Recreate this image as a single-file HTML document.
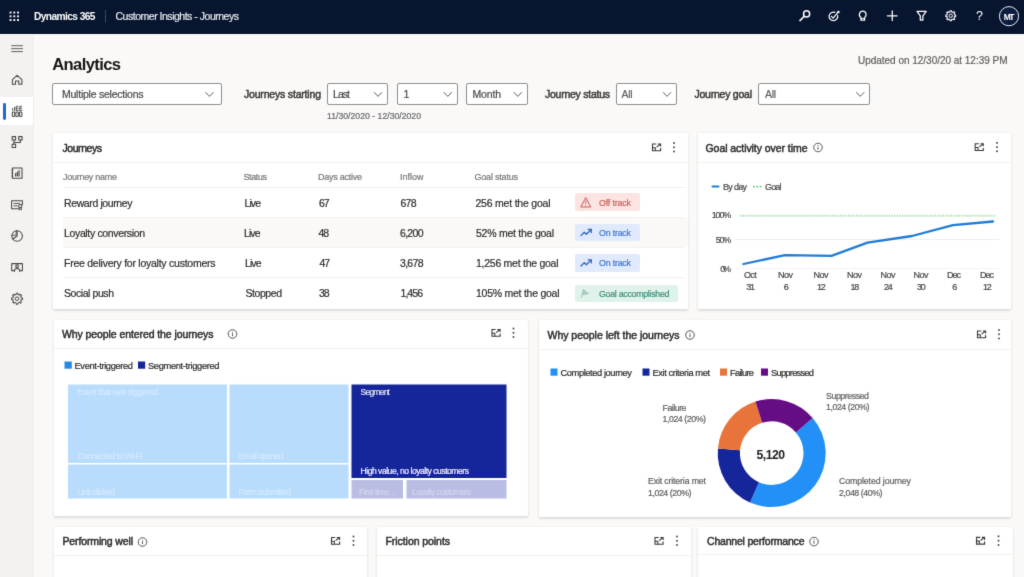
<!DOCTYPE html>
<html><head><meta charset="utf-8">
<style>
*{box-sizing:border-box;margin:0;padding:0}
html,body{width:1024px;height:577px;overflow:hidden;background:#faf9f8;font-family:"Liberation Sans",sans-serif;color:#201f1e}
#hdr{position:absolute;left:0;top:0;width:1024px;height:33.5px;background:#07152f}
#side{position:absolute;left:0;top:33.5px;width:33px;height:544px;background:#f3f2f1}
.t{position:absolute;white-space:nowrap;line-height:1;-webkit-text-stroke:0.2px}
.b{position:absolute}
.dd{position:absolute;top:82.5px;height:22.5px;background:#fff;border:1px solid #918f8d;border-radius:2px}
.card{position:absolute;background:#fff;border-radius:1.2px;box-shadow:0 1.2px 2.6px rgba(0,0,0,.11),0 0 1.2px rgba(0,0,0,.10)}
.hl{position:absolute;height:1px;background:#f2f1ef}
svg{position:absolute;overflow:visible}
#pg{position:absolute;left:0;top:0;width:1024px;height:577px;overflow:hidden;background:#faf9f8;filter:url(#soft)}
</style></head><body><svg width="0" height="0" style="position:absolute"><filter id="soft" x="0" y="0" width="100%" height="100%" color-interpolation-filters="sRGB"><feConvolveMatrix order="3" kernelMatrix="0.01134 0.08382 0.01134 0.08382 0.61935 0.08382 0.01134 0.08382 0.01134" edgeMode="duplicate" preserveAlpha="true"/></filter></svg><div id="pg">
<!-- header -->
<div id="hdr"></div>
<div id="side"></div><div class="b" style="left:33px;top:33.5px;width:1px;height:544px;background:#eeedeb"></div>
<div class="b" style="left:0;top:33.5px;width:1024px;height:1.6px;background:#fdfcfb"></div>
<div class="b" style="left:0;top:96.6px;width:33px;height:28.2px;background:#fff"></div>
<div class="b" style="left:3.3px;top:102.5px;width:2.8px;height:17px;background:#2266d3;border-radius:1.4px"></div>
<svg width="40" height="577" viewBox="0 0 40 577" style="left:0;top:0"><rect x="11.3" y="45.2" width="11.6" height="1" fill="#605e5c"/>
<rect x="11.3" y="48.15" width="11.6" height="1" fill="#605e5c"/>
<rect x="11.3" y="51.1" width="11.6" height="1" fill="#605e5c"/>
<g fill="none" stroke="#484644" stroke-width="1.05" stroke-linejoin="round" stroke-linecap="round">
<path d="M12.4,79.6 L17.1,75.4 L21.9,79.6 V84.2 H18.8 V81 H15.5 V84.2 H12.4 Z"/>
<rect x="12.3" y="112" width="2.4" height="4.5" rx="0.8"/><rect x="15.9" y="112" width="2.4" height="4.5" rx="0.8"/><rect x="19.5" y="112" width="2.4" height="4.5" rx="0.8"/>
<path d="M12.6,110.4 V108.6 M14.4,110.4 V107.2 M16.2,110.4 V106.3 H18 M16.2,108.3 H18.2 M19.8,110.4 V106.3 H21.6 M19.8,108.3 H21.6 M16.2,110.4 H18.2 M19.8,110.4 H21.8" stroke-width="0.9"/>
<rect x="12.2" y="136.6" width="3.4" height="3.4"/><rect x="18.7" y="136.6" width="3.4" height="3.4"/><rect x="12.2" y="144.2" width="3.4" height="3.4"/>
<path d="M13.9,140 V144.2 M13.9,142.4 H20.4 V140"/>
<rect x="12.4" y="168" width="9.6" height="10.2"/><path d="M15.6,176 V173.6 M17.3,176 V172 M19,176 V170.6" stroke-width="1.2"/><path d="M11.6,170.2 H13 M11.6,173.1 H13 M11.6,176 H13" stroke-width="0.8"/>
<path d="M18.6,208.8 H11.6 V200.8 H22.4 V204.4"/><path d="M13.8,203.4 H19.6 M13.8,205.8 H17.4" stroke-width="0.9"/><circle cx="20.3" cy="206.2" r="1.6"/><path d="M19.3,207.6 V210 L20.3,209.3 L21.3,210 V207.6" stroke-width="0.9"/>
<circle cx="17.1" cy="236" r="5.3"/><path d="M17.1,230.7 V236 L12.8,239"/><path d="M12.1,235.2 H16.2 V231" stroke-width="0.9"/>
<path d="M13.4,270.6 H11.7 V263.6 H22.4 V270.6 H20.7"/><circle cx="17.05" cy="266.2" r="1.35"/><path d="M14.3,271.4 C14.3,267.6 19.8,267.6 19.8,271.4"/>
</g>
<path d="M16.05,294.52 L16.28,293.25 L17.82,293.25 L18.05,294.52 L19.30,295.03 L20.35,294.30 L21.45,295.40 L20.72,296.45 L21.23,297.70 L22.50,297.93 L22.50,299.47 L21.23,299.70 L20.72,300.95 L21.45,302.00 L20.35,303.10 L19.30,302.37 L18.05,302.88 L17.82,304.15 L16.28,304.15 L16.05,302.88 L14.80,302.37 L13.75,303.10 L12.65,302.00 L13.38,300.95 L12.87,299.70 L11.60,299.47 L11.60,297.93 L12.87,297.70 L13.38,296.45 L12.65,295.40 L13.75,294.30 L14.80,295.03Z" fill="none" stroke="#484644" stroke-width="1.05" stroke-linejoin="round"/>
<circle cx="17.05" cy="298.7" r="1.8" fill="none" stroke="#484644" stroke-width="1"/></svg>

<!-- dropdowns -->
<div class="dd" style="left:52px;width:169.5px"></div>
<div class="dd" style="left:327px;width:61.3px"></div>
<div class="dd" style="left:396.5px;width:61.2px"></div>
<div class="dd" style="left:466.3px;width:61.4px"></div>
<div class="dd" style="left:616px;width:60.8px"></div>
<div class="dd" style="left:758.3px;width:112px"></div>

<!-- cards -->
<div class="card" style="left:53px;top:133px;width:635px;height:175.5px"></div>
<div class="card" style="left:697.5px;top:133px;width:313.5px;height:176px"></div>
<div class="card" style="left:53.5px;top:320px;width:474px;height:196px"></div>
<div class="card" style="left:539px;top:320px;width:471.5px;height:196.5px"></div>
<div class="card" style="left:53.5px;top:527px;width:313px;height:60px"></div>
<div class="card" style="left:377px;top:527px;width:314px;height:60px"></div>
<div class="card" style="left:698px;top:526.5px;width:315px;height:60px"></div>
<!-- header dividers -->
<div class="hl" style="left:53px;top:161.5px;width:635px"></div>
<div class="hl" style="left:697.5px;top:161.5px;width:313.5px"></div>
<div class="hl" style="left:53.5px;top:347.7px;width:474px"></div>
<div class="hl" style="left:539px;top:348.6px;width:471.5px"></div>
<div class="hl" style="left:53.5px;top:554.5px;width:313px"></div>
<div class="hl" style="left:377px;top:554.5px;width:314px"></div>
<div class="hl" style="left:698px;top:554.3px;width:315px"></div>
<!-- table -->
<div class="b" style="left:62.5px;top:217.5px;width:625.5px;height:29.5px;background:#faf9f8"></div>
<div class="hl" style="left:62.5px;top:187px;width:622.5px"></div>
<div class="hl" style="left:62.5px;top:216.7px;width:622.5px"></div>
<div class="hl" style="left:62.5px;top:246.7px;width:622.5px"></div>
<div class="hl" style="left:62.5px;top:276.7px;width:622.5px"></div>
<!-- badges -->
<div class="b" style="left:574.7px;top:193.3px;width:65.5px;height:17.8px;background:#fbe4e1;border-radius:2px"></div>
<div class="b" style="left:574.7px;top:223.6px;width:65.5px;height:17.8px;background:#e0eafc;border-radius:2px"></div>
<div class="b" style="left:574.7px;top:254px;width:65.5px;height:17.8px;background:#e0eafc;border-radius:2px"></div>
<div class="b" style="left:574.5px;top:284.6px;width:103.5px;height:17.8px;background:#e0f3ea;border-radius:2px"></div>
<svg width="1024" height="577" viewBox="0 0 1024 577" style="left:0;top:0">
<rect x="9.60" y="11.60" width="1.9" height="1.9" fill="#ffffff"/>
<rect x="9.60" y="15.35" width="1.9" height="1.9" fill="#ffffff"/>
<rect x="9.60" y="19.10" width="1.9" height="1.9" fill="#ffffff"/>
<rect x="13.35" y="11.60" width="1.9" height="1.9" fill="#ffffff"/>
<rect x="13.35" y="15.35" width="1.9" height="1.9" fill="#ffffff"/>
<rect x="13.35" y="19.10" width="1.9" height="1.9" fill="#ffffff"/>
<rect x="17.10" y="11.60" width="1.9" height="1.9" fill="#ffffff"/>
<rect x="17.10" y="15.35" width="1.9" height="1.9" fill="#ffffff"/>
<rect x="17.10" y="19.10" width="1.9" height="1.9" fill="#ffffff"/>
<rect x="105.2" y="10" width="0.8" height="12.5" fill="#4a5572"/>
<g fill="none" stroke="#ffffff" stroke-width="1.25" stroke-linecap="round" stroke-linejoin="round"><circle cx="806.6" cy="13.9" r="3.05" stroke-width="1.5"/><path d="M804.2,16.4 L799.9,20.6" stroke-width="1.5"/><path d="M837.63,15.65 A4.3,4.3 0 1 1 834.87,12.36"/><path d="M831.4,16.4 L833.1,18.1 L838.2,12.1"/><path d="M860.9,17.6 C858.2,15.6 859.3,11 862.75,11 C866.2,11 867.3,15.6 864.6,17.6 V20.2 H860.9 Z"/><path d="M861.2,18.4 H864.3" stroke-width="0.9"/><path d="M892.25,10.9 V20.6 M887.4,15.75 H897.1"/><path d="M917,11.4 H926.2 L922.9,15.8 V20 H920.3 V15.8 Z"/></g>
<circle cx="838.4" cy="11.9" r="1.25" fill="#ffffff"/>
<path d="M949.84,11.96 L950.05,10.80 L951.45,10.80 L951.66,11.96 L952.79,12.42 L953.75,11.75 L954.75,12.75 L954.08,13.71 L954.54,14.84 L955.70,15.05 L955.70,16.45 L954.54,16.66 L954.08,17.79 L954.75,18.75 L953.75,19.75 L952.79,19.08 L951.66,19.54 L951.45,20.70 L950.05,20.70 L949.84,19.54 L948.71,19.08 L947.75,19.75 L946.75,18.75 L947.42,17.79 L946.96,16.66 L945.80,16.45 L945.80,15.05 L946.96,14.84 L947.42,13.71 L946.75,12.75 L947.75,11.75 L948.71,12.42Z" fill="none" stroke="#ffffff" stroke-width="1.1" stroke-linejoin="round"/>
<circle cx="950.75" cy="15.75" r="1.7" fill="none" stroke="#ffffff" stroke-width="1"/>
<text x="979.5" y="20.4" font-family="Liberation Sans" font-size="12.5" fill="#ffffff" text-anchor="middle">?</text>
<circle cx="1009" cy="16.2" r="9.6" fill="#0c1c3e" stroke="#e8ebf3" stroke-width="1"/>
<path d="M205.5,92.2 L209.5,96.39999999999999 L213.5,92.2" fill="none" stroke="#605e5c" stroke-width="1"/>
<path d="M374,92.2 L378,96.39999999999999 L382,92.2" fill="none" stroke="#605e5c" stroke-width="1"/>
<path d="M443.75,92.2 L447.75,96.39999999999999 L451.75,92.2" fill="none" stroke="#605e5c" stroke-width="1"/>
<path d="M513.75,92.2 L517.75,96.39999999999999 L521.75,92.2" fill="none" stroke="#605e5c" stroke-width="1"/>
<path d="M663,92.2 L667,96.39999999999999 L671,92.2" fill="none" stroke="#605e5c" stroke-width="1"/>
<path d="M856.25,92.2 L860.25,96.39999999999999 L864.25,92.2" fill="none" stroke="#605e5c" stroke-width="1"/>
<g fill="none" stroke="#3b3a39" stroke-width="1.1"><path d="M656.2,144.0 H652.5 V150.7 H660.6 V148.1"/><path d="M652.5,147.7 H655.3 V150.7"/><path d="M656.6,147.1 L660.2,144.2"/><path d="M657.8,144.0 H660.6 V146.5"/></g>
<rect x="673.2" y="142.2" width="1.6" height="1.6" fill="#323130"/><rect x="673.2" y="146.5" width="1.6" height="1.6" fill="#323130"/><rect x="673.2" y="150.7" width="1.6" height="1.6" fill="#323130"/>
<g fill="none" stroke="#3b3a39" stroke-width="1.1"><path d="M978.9000000000001,143.8 H975.2 V150.5 H983.3000000000001 V147.9"/><path d="M975.2,147.5 H978.0 V150.5"/><path d="M979.3000000000001,146.9 L982.9000000000001,144.0"/><path d="M980.5,143.8 H983.3000000000001 V146.3"/></g>
<rect x="996.2" y="142.1" width="1.6" height="1.6" fill="#323130"/><rect x="996.2" y="146.29999999999998" width="1.6" height="1.6" fill="#323130"/><rect x="996.2" y="150.5" width="1.6" height="1.6" fill="#323130"/>
<g fill="none" stroke="#3b3a39" stroke-width="1.1"><path d="M495.7,329.5 H492.0 V336.2 H500.1 V333.6"/><path d="M492.0,333.2 H494.8 V336.2"/><path d="M496.1,332.6 L499.7,329.7"/><path d="M497.3,329.5 H500.1 V332.0"/></g>
<rect x="512.7" y="327.7" width="1.6" height="1.6" fill="#323130"/><rect x="512.7" y="332.0" width="1.6" height="1.6" fill="#323130"/><rect x="512.7" y="336.2" width="1.6" height="1.6" fill="#323130"/>
<g fill="none" stroke="#3b3a39" stroke-width="1.1"><path d="M981.2,331.0 H977.5 V337.7 H985.6 V335.1"/><path d="M977.5,334.7 H980.3 V337.7"/><path d="M981.6,334.1 L985.2,331.2"/><path d="M982.8,331.0 H985.6 V333.5"/></g>
<rect x="998.2" y="329.2" width="1.6" height="1.6" fill="#323130"/><rect x="998.2" y="333.5" width="1.6" height="1.6" fill="#323130"/><rect x="998.2" y="337.7" width="1.6" height="1.6" fill="#323130"/>
<g fill="none" stroke="#3b3a39" stroke-width="1.1"><path d="M335.2,537.5 H331.5 V544.2 H339.6 V541.6"/><path d="M331.5,541.2 H334.3 V544.2"/><path d="M335.6,540.6 L339.2,537.7"/><path d="M336.8,537.5 H339.6 V540.0"/></g>
<rect x="352.7" y="535.7" width="1.6" height="1.6" fill="#323130"/><rect x="352.7" y="540.0" width="1.6" height="1.6" fill="#323130"/><rect x="352.7" y="544.2" width="1.6" height="1.6" fill="#323130"/>
<g fill="none" stroke="#3b3a39" stroke-width="1.1"><path d="M658.7,537.5 H655.0 V544.2 H663.1 V541.6"/><path d="M655.0,541.2 H657.8 V544.2"/><path d="M659.1,540.6 L662.7,537.7"/><path d="M660.3,537.5 H663.1 V540.0"/></g>
<rect x="676.2" y="535.7" width="1.6" height="1.6" fill="#323130"/><rect x="676.2" y="540.0" width="1.6" height="1.6" fill="#323130"/><rect x="676.2" y="544.2" width="1.6" height="1.6" fill="#323130"/>
<g fill="none" stroke="#3b3a39" stroke-width="1.1"><path d="M980.2,537.4 H976.5 V544.1 H984.6 V541.5"/><path d="M976.5,541.1 H979.3 V544.1"/><path d="M980.6,540.5 L984.2,537.6"/><path d="M981.8,537.4 H984.6 V539.9"/></g>
<rect x="997.7" y="535.5" width="1.6" height="1.6" fill="#323130"/><rect x="997.7" y="539.9000000000001" width="1.6" height="1.6" fill="#323130"/><rect x="997.7" y="544.2" width="1.6" height="1.6" fill="#323130"/>
<circle cx="818" cy="147.5" r="4.3" fill="none" stroke="#484644" stroke-width="0.9"/><rect x="817.55" y="146.8" width="0.9" height="2.9" fill="#484644"/><rect x="817.55" y="145.1" width="0.9" height="0.9" fill="#484644"/>
<circle cx="232.5" cy="334" r="4.3" fill="none" stroke="#484644" stroke-width="0.9"/><rect x="232.05" y="333.3" width="0.9" height="2.9" fill="#484644"/><rect x="232.05" y="331.6" width="0.9" height="0.9" fill="#484644"/>
<circle cx="690" cy="335" r="4.3" fill="none" stroke="#484644" stroke-width="0.9"/><rect x="689.55" y="334.3" width="0.9" height="2.9" fill="#484644"/><rect x="689.55" y="332.6" width="0.9" height="0.9" fill="#484644"/>
<circle cx="142.5" cy="542" r="4.3" fill="none" stroke="#484644" stroke-width="0.9"/><rect x="142.05" y="541.3" width="0.9" height="2.9" fill="#484644"/><rect x="142.05" y="539.6" width="0.9" height="0.9" fill="#484644"/>
<circle cx="814" cy="541.6" r="4.3" fill="none" stroke="#484644" stroke-width="0.9"/><rect x="813.55" y="540.9" width="0.9" height="2.9" fill="#484644"/><rect x="813.55" y="539.2" width="0.9" height="0.9" fill="#484644"/>
<g fill="none" stroke="#cf5553" stroke-width="1" stroke-linejoin="round"><path d="M585.75,197.6 L590.7,207 H580.8 Z"/></g><rect x="585.3" y="200.6" width="0.9" height="3.4" fill="#cf5553"/><rect x="585.3" y="204.7" width="0.9" height="0.9" fill="#cf5553"/>
<g transform="translate(0,0)" fill="none" stroke="#2f63bd" stroke-width="1.3" stroke-linecap="round" stroke-linejoin="round"><path d="M581,235.6 L584.3,232.2 L586.3,234.3 L591,229.7"/><path d="M588.2,229.4 H591.3 V232.5"/></g>
<g transform="translate(0,30.4)" fill="none" stroke="#2f63bd" stroke-width="1.3" stroke-linecap="round" stroke-linejoin="round"><path d="M581,235.6 L584.3,232.2 L586.3,234.3 L591,229.7"/><path d="M588.2,229.4 H591.3 V232.5"/></g>
<g stroke="#93c4b6" stroke-width="0.9" stroke-linejoin="round" stroke-linecap="round"><path d="M583.7,289.7 L581.4,297.5" fill="none"/><path d="M583.6,289.9 L588.5,293.6 L582.7,294.5 Z" fill="#a8d2c6"/></g>
<rect x="735" y="239" width="264.5" height="0.8" fill="#eceae8"/>
<rect x="735" y="268" width="264.5" height="0.7" fill="#f1efee"/>
<path d="M740,215.7 H995" stroke="#addfb8" stroke-width="2" stroke-dasharray="1.5 1.2" fill="none"/>
<polyline points="743.5,264 785,255.1 831.5,255.9 867.5,242.6 912,236 953,225.1 993,221.5" fill="none" stroke="#1f7bd6" stroke-width="2.3" stroke-linejoin="round" stroke-linecap="round"/>
<rect x="711.5" y="185.5" width="8" height="2.1" rx="1" fill="#1f7bd6"/>
<path d="M753,186.6 H761.5" stroke="#6fcf85" stroke-width="1.6" stroke-dasharray="1.9 1.4" fill="none"/>
<rect x="68" y="384.5" width="159" height="78.5" fill="#b9dcfc"/>
<rect x="229.5" y="384.5" width="119.0" height="78.5" fill="#b9dcfc"/>
<rect x="68" y="464.5" width="159" height="34.0" fill="#b9dcfc"/>
<rect x="229.5" y="464.5" width="119.0" height="34.0" fill="#b9dcfc"/>
<rect x="351.5" y="384.5" width="155.0" height="93.5" fill="#15259a"/>
<rect x="351.5" y="480" width="51.5" height="18.5" fill="#babde3"/>
<rect x="406.5" y="480" width="100.0" height="18.5" fill="#babde3"/>
<rect x="64.5" y="361.5" width="7.3" height="7.2" fill="#2389e8"/><rect x="138" y="361.5" width="7.2" height="7.2" fill="#15259a"/>
<path d="M812.70,417.96 A54.0,54.0 0 0 1 749.99,502.55 L758.92,482.22 A31.8,31.8 0 0 0 795.84,432.41Z" fill="#2290f6"/>
<path d="M749.99,502.55 A54.0,54.0 0 0 1 717.91,448.39 L740.02,450.33 A31.8,31.8 0 0 0 758.92,482.22Z" fill="#15259a"/>
<path d="M717.91,448.39 A54.0,54.0 0 0 1 755.46,401.60 L762.14,422.77 A31.8,31.8 0 0 0 740.02,450.33Z" fill="#e8743b"/>
<path d="M755.46,401.60 A54.0,54.0 0 0 1 812.70,417.96 L795.84,432.41 A31.8,31.8 0 0 0 762.14,422.77Z" fill="#660d85"/>
<rect x="550.5" y="368.5" width="7" height="7.2" fill="#2290f6"/>
<rect x="642.5" y="368.5" width="7" height="7.2" fill="#15259a"/>
<rect x="720" y="368.5" width="7" height="7.2" fill="#e8743b"/>
<rect x="761" y="368.5" width="7" height="7.2" fill="#660d85"/>
</svg>
<div class="t" style="left:34.00px;top:11.57px;font-size:10.2px;color:#ffffff;font-weight:bold;-webkit-text-stroke:0;letter-spacing:-0.588px;">Dynamics 365</div>
<div class="t" style="left:115.50px;top:10.91px;font-size:10.5px;color:#e6e9f0;letter-spacing:-0.484px;">Customer Insights - Journeys</div>
<div class="t" style="left:1003.75px;top:12.90px;font-size:8.5px;color:#ffffff;font-weight:bold;-webkit-text-stroke:0;letter-spacing:-1.531px;">MT</div>
<div class="t" style="left:52.20px;top:56.95px;font-size:16.6px;color:#161514;font-weight:bold;-webkit-text-stroke:0;letter-spacing:-0.623px;">Analytics</div>
<div class="t" style="left:858.00px;top:55.53px;font-size:10px;color:#605e5c;letter-spacing:-0.021px;">Updated on 12/30/20 at 12:39 PM</div>
<div class="t" style="left:62.00px;top:89.11px;font-size:10.5px;color:#484644;letter-spacing:-0.239px;">Multiple selections</div>
<div class="t" style="left:244.00px;top:89.41px;font-size:10.5px;color:#3b3a39;-webkit-text-stroke:0.48px #3b3a39;letter-spacing:-0.186px;">Journeys starting</div>
<div class="t" style="left:333.00px;top:89.11px;font-size:10.5px;color:#484644;letter-spacing:-0.953px;">Last</div>
<div class="t" style="left:403.50px;top:89.11px;font-size:10.5px;color:#484644;">1</div>
<div class="t" style="left:472.50px;top:89.11px;font-size:10.5px;color:#484644;letter-spacing:-0.172px;">Month</div>
<div class="t" style="left:545.00px;top:89.41px;font-size:10.5px;color:#3b3a39;-webkit-text-stroke:0.48px #3b3a39;letter-spacing:-0.254px;">Journey status</div>
<div class="t" style="left:621.50px;top:89.11px;font-size:10.5px;color:#605e5c;letter-spacing:-0.336px;">All</div>
<div class="t" style="left:694.50px;top:89.41px;font-size:10.5px;color:#3b3a39;-webkit-text-stroke:0.48px #3b3a39;letter-spacing:-0.239px;">Journey goal</div>
<div class="t" style="left:765.00px;top:89.11px;font-size:10.5px;color:#605e5c;letter-spacing:-0.336px;">All</div>
<div class="t" style="left:327.00px;top:111.64px;font-size:8.7px;color:#69676a;">11/30/2020 - 12/30/2020</div>
<div class="t" style="left:62.50px;top:142.61px;font-size:10.5px;color:#2f2e2d;-webkit-text-stroke:0.48px #2f2e2d;letter-spacing:-0.444px;">Journeys</div>
<div class="t" style="left:705.50px;top:142.61px;font-size:10.5px;color:#2f2e2d;-webkit-text-stroke:0.48px #2f2e2d;letter-spacing:-0.059px;">Goal activity over time</div>
<div class="t" style="left:62.00px;top:328.61px;font-size:10.5px;color:#2f2e2d;-webkit-text-stroke:0.48px #2f2e2d;letter-spacing:-0.087px;">Why people entered the journeys</div>
<div class="t" style="left:547.50px;top:329.81px;font-size:10.5px;color:#2f2e2d;-webkit-text-stroke:0.48px #2f2e2d;letter-spacing:-0.019px;">Why people left the journeys</div>
<div class="t" style="left:62.50px;top:536.41px;font-size:10.5px;color:#2f2e2d;-webkit-text-stroke:0.48px #2f2e2d;letter-spacing:-0.133px;">Performing well</div>
<div class="t" style="left:385.50px;top:536.31px;font-size:10.5px;color:#2f2e2d;-webkit-text-stroke:0.48px #2f2e2d;letter-spacing:-0.061px;">Friction points</div>
<div class="t" style="left:707.00px;top:536.31px;font-size:10.5px;color:#2f2e2d;-webkit-text-stroke:0.48px #2f2e2d;letter-spacing:-0.194px;">Channel performance</div>
<div class="t" style="left:63.00px;top:173.08px;font-size:9px;color:#7a7876;letter-spacing:-0.277px;">Journey name</div>
<div class="t" style="left:243.50px;top:172.68px;font-size:9px;color:#7a7876;letter-spacing:-0.403px;">Status</div>
<div class="t" style="left:318.00px;top:172.68px;font-size:9px;color:#7a7876;letter-spacing:-0.253px;">Days active</div>
<div class="t" style="left:400.00px;top:172.68px;font-size:9px;color:#7a7876;">Inflow</div>
<div class="t" style="left:474.50px;top:172.68px;font-size:9px;color:#7a7876;letter-spacing:-0.203px;">Goal status</div>
<div class="t" style="left:64.00px;top:198.41px;font-size:10.5px;color:#2e2d2c;letter-spacing:-0.388px;">Reward journey</div>
<div class="t" style="left:244.50px;top:198.41px;font-size:10.5px;color:#2e2d2c;letter-spacing:-0.922px;">Live</div>
<div class="t" style="left:319.00px;top:198.41px;font-size:10.5px;color:#2e2d2c;letter-spacing:-1.188px;">67</div>
<div class="t" style="left:400.50px;top:198.41px;font-size:10.5px;color:#2e2d2c;letter-spacing:-0.766px;">678</div>
<div class="t" style="left:475.50px;top:198.41px;font-size:10.5px;color:#2e2d2c;letter-spacing:-0.216px;">256 met the goal</div>
<div class="t" style="left:64.00px;top:228.11px;font-size:10.5px;color:#2e2d2c;letter-spacing:-0.351px;">Loyalty conversion</div>
<div class="t" style="left:244.00px;top:228.11px;font-size:10.5px;color:#2e2d2c;letter-spacing:-0.922px;">Live</div>
<div class="t" style="left:318.50px;top:228.11px;font-size:10.5px;color:#2e2d2c;letter-spacing:-1.188px;">48</div>
<div class="t" style="left:400.00px;top:228.11px;font-size:10.5px;color:#2e2d2c;letter-spacing:-0.695px;">6,200</div>
<div class="t" style="left:476.00px;top:228.11px;font-size:10.5px;color:#2e2d2c;letter-spacing:-0.248px;">52% met the goal</div>
<div class="t" style="left:64.00px;top:258.11px;font-size:10.5px;color:#2e2d2c;letter-spacing:-0.247px;">Free delivery for loyalty customers</div>
<div class="t" style="left:245.00px;top:258.11px;font-size:10.5px;color:#2e2d2c;letter-spacing:-0.922px;">Live</div>
<div class="t" style="left:319.50px;top:258.11px;font-size:10.5px;color:#2e2d2c;letter-spacing:-1.188px;">47</div>
<div class="t" style="left:400.00px;top:258.11px;font-size:10.5px;color:#2e2d2c;letter-spacing:-0.695px;">3,678</div>
<div class="t" style="left:476.00px;top:258.11px;font-size:10.5px;color:#2e2d2c;letter-spacing:-0.264px;">1,256 met the goal</div>
<div class="t" style="left:64.00px;top:287.91px;font-size:10.5px;color:#2e2d2c;letter-spacing:-0.430px;">Social push</div>
<div class="t" style="left:245.50px;top:287.91px;font-size:10.5px;color:#2e2d2c;letter-spacing:-0.438px;">Stopped</div>
<div class="t" style="left:319.00px;top:287.91px;font-size:10.5px;color:#2e2d2c;letter-spacing:-1.188px;">38</div>
<div class="t" style="left:400.50px;top:287.91px;font-size:10.5px;color:#2e2d2c;letter-spacing:-0.945px;">1,456</div>
<div class="t" style="left:476.00px;top:287.91px;font-size:10.5px;color:#2e2d2c;letter-spacing:-0.254px;">105% met the goal</div>
<div class="t" style="left:599.00px;top:198.55px;font-size:8.8px;color:#cc5f5d;letter-spacing:-0.137px;">Off track</div>
<div class="t" style="left:599.00px;top:228.55px;font-size:8.8px;color:#3f76d2;letter-spacing:-0.179px;">On track</div>
<div class="t" style="left:599.00px;top:259.05px;font-size:8.8px;color:#3f76d2;letter-spacing:-0.179px;">On track</div>
<div class="t" style="left:599.00px;top:289.55px;font-size:8.8px;color:#3f8d78;letter-spacing:-0.270px;">Goal accomplished</div>
<div class="t" style="left:723.00px;top:182.78px;font-size:9px;color:#484644;letter-spacing:-0.703px;">By day</div>
<div class="t" style="left:765.00px;top:182.78px;font-size:9px;color:#484644;letter-spacing:-0.839px;">Goal</div>
<div class="t" style="left:711.75px;top:211.08px;font-size:9px;color:#484644;letter-spacing:-1.177px;">100%</div>
<div class="t" style="left:715.75px;top:236.08px;font-size:9px;color:#484644;letter-spacing:-1.258px;">50%</div>
<div class="t" style="left:720.25px;top:265.08px;font-size:9px;color:#484644;letter-spacing:-2.216px;">0%</div>
<div class="t" style="left:743.92px;top:270.78px;font-size:9px;color:#484644;letter-spacing:-0.633px;">Oct</div>
<div class="t" style="left:746.25px;top:283.38px;font-size:9px;color:#484644;letter-spacing:-1.316px;">31</div>
<div class="t" style="left:778.00px;top:270.78px;font-size:9px;color:#484644;letter-spacing:-0.508px;">Nov</div>
<div class="t" style="left:783.75px;top:283.38px;font-size:9px;color:#484644;">6</div>
<div class="t" style="left:813.50px;top:270.78px;font-size:9px;color:#484644;letter-spacing:-0.508px;">Nov</div>
<div class="t" style="left:816.95px;top:283.38px;font-size:9px;color:#484644;letter-spacing:-1.316px;">12</div>
<div class="t" style="left:847.00px;top:270.78px;font-size:9px;color:#484644;letter-spacing:-0.508px;">Nov</div>
<div class="t" style="left:850.45px;top:283.38px;font-size:9px;color:#484644;letter-spacing:-1.316px;">18</div>
<div class="t" style="left:880.50px;top:270.78px;font-size:9px;color:#484644;letter-spacing:-0.508px;">Nov</div>
<div class="t" style="left:883.95px;top:283.38px;font-size:9px;color:#484644;letter-spacing:-1.316px;">24</div>
<div class="t" style="left:913.50px;top:270.78px;font-size:9px;color:#484644;letter-spacing:-0.508px;">Nov</div>
<div class="t" style="left:916.95px;top:283.38px;font-size:9px;color:#484644;letter-spacing:-1.316px;">30</div>
<div class="t" style="left:947.00px;top:270.78px;font-size:9px;color:#484644;letter-spacing:-1.008px;">Dec</div>
<div class="t" style="left:952.25px;top:283.38px;font-size:9px;color:#484644;">6</div>
<div class="t" style="left:980.00px;top:270.78px;font-size:9px;color:#484644;letter-spacing:-1.008px;">Dec</div>
<div class="t" style="left:982.95px;top:283.38px;font-size:9px;color:#484644;letter-spacing:-1.316px;">12</div>
<div class="t" style="left:74.50px;top:361.73px;font-size:9.3px;color:#2b2a29;letter-spacing:-0.362px;">Event-triggered</div>
<div class="t" style="left:148.00px;top:361.73px;font-size:9.3px;color:#2b2a29;letter-spacing:-0.344px;">Segment-triggered</div>
<div class="t" style="left:77.00px;top:387.72px;font-size:8.6px;color:#d3e8fd;letter-spacing:-0.508px;">Event that was triggered</div>
<div class="t" style="left:77.50px;top:451.72px;font-size:8.6px;color:#d3e8fd;letter-spacing:-0.504px;">Connected to Wi-Fi</div>
<div class="t" style="left:77.50px;top:487.92px;font-size:8.6px;color:#d3e8fd;letter-spacing:-0.629px;">Link clicked</div>
<div class="t" style="left:238.50px;top:451.72px;font-size:8.6px;color:#d3e8fd;letter-spacing:-0.688px;">Email opened</div>
<div class="t" style="left:238.50px;top:487.92px;font-size:8.6px;color:#d3e8fd;letter-spacing:-0.554px;">Form submitted</div>
<div class="t" style="left:360.50px;top:387.72px;font-size:8.6px;color:#dfe2f6;letter-spacing:-0.818px;">Segment</div>
<div class="t" style="left:360.50px;top:467.22px;font-size:8.6px;color:#f1f2fb;letter-spacing:-0.491px;">High value, no loyalty customers</div>
<div class="t" style="left:359.00px;top:488.12px;font-size:8.6px;color:#d2d4ee;letter-spacing:-0.569px;">First time ...</div>
<div class="t" style="left:412.00px;top:488.12px;font-size:8.6px;color:#d2d4ee;letter-spacing:-0.642px;">Loyalty customers</div>
<div class="t" style="left:560.50px;top:368.73px;font-size:9.3px;color:#2b2a29;letter-spacing:-0.409px;">Completed journey</div>
<div class="t" style="left:652.50px;top:368.73px;font-size:9.3px;color:#2b2a29;letter-spacing:-0.410px;">Exit criteria met</div>
<div class="t" style="left:730.00px;top:368.73px;font-size:9.3px;color:#2b2a29;letter-spacing:-0.737px;">Failure</div>
<div class="t" style="left:771.00px;top:368.73px;font-size:9.3px;color:#2b2a29;letter-spacing:-0.736px;">Suppressed</div>
<div class="t" style="left:662.50px;top:404.15px;font-size:8.8px;color:#605e5c;letter-spacing:-0.482px;">Failure</div>
<div class="t" style="left:662.50px;top:414.55px;font-size:8.8px;color:#605e5c;letter-spacing:-0.444px;">1,024 (20%)</div>
<div class="t" style="left:826.00px;top:392.15px;font-size:8.8px;color:#605e5c;letter-spacing:-0.439px;">Suppressed</div>
<div class="t" style="left:826.00px;top:402.55px;font-size:8.8px;color:#605e5c;letter-spacing:-0.444px;">1,024 (20%)</div>
<div class="t" style="left:648.00px;top:476.55px;font-size:8.8px;color:#605e5c;letter-spacing:-0.164px;">Exit criteria met</div>
<div class="t" style="left:648.00px;top:489.15px;font-size:8.8px;color:#605e5c;letter-spacing:-0.444px;">1,024 (20%)</div>
<div class="t" style="left:839.00px;top:476.55px;font-size:8.8px;color:#605e5c;letter-spacing:-0.115px;">Completed journey</div>
<div class="t" style="left:839.00px;top:489.15px;font-size:8.8px;color:#605e5c;letter-spacing:-0.444px;">2,048 (40%)</div>
<div class="t" style="left:756.50px;top:449.27px;font-size:12.2px;color:#1b1a19;font-weight:bold;-webkit-text-stroke:0;letter-spacing:-0.500px;">5,120</div>
</div></body></html>
